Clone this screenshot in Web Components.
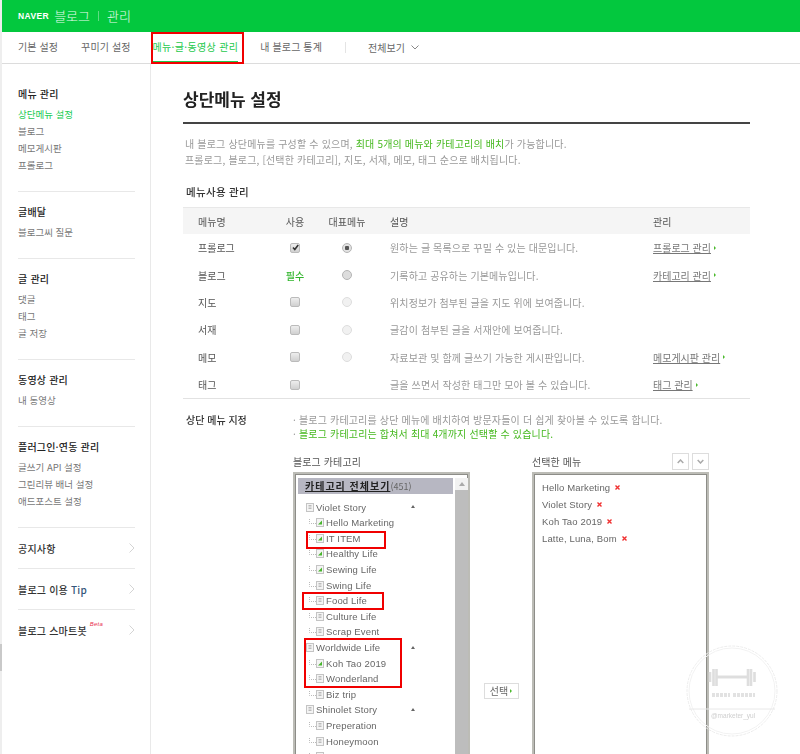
<!DOCTYPE html>
<html lang="ko">
<head>
<meta charset="utf-8">
<title>블로그 관리</title>
<style>
  html, body { margin: 0; padding: 0; background: #fff; }
  body {
    width: 800px; height: 754px; overflow: hidden; position: relative;
    font-family: "Noto Sans CJK KR", "Liberation Sans", sans-serif;
    font-size: 11px; color: #666;
  }
  admin-page { width: 800px; height: 754px; }
  side-fold b { font-weight: 500; color: #35557a; }
</style>
</head>
<body>
<admin-page>
  <blog-header></blog-header>
  <blog-nav></blog-nav>
  <side-menu slot="side">
    <side-group heading="메뉴 관리">
      <side-link active>상단메뉴 설정</side-link>
      <side-link>블로그</side-link>
      <side-link>메모게시판</side-link>
      <side-link>프롤로그</side-link>
    </side-group>
    <side-group heading="글배달"><side-link>블로그씨 질문</side-link></side-group>
    <side-group heading="글 관리">
      <side-link>댓글</side-link>
      <side-link>태그</side-link>
      <side-link>글 저장</side-link>
    </side-group>
    <side-group heading="동영상 관리"><side-link>내 동영상</side-link></side-group>
    <side-group heading="플러그인·연동 관리">
      <side-link>글쓰기 API 설정</side-link>
      <side-link>그린리뷰 배너 설정</side-link>
      <side-link>애드포스트 설정</side-link>
    </side-group>
    <side-fold>공지사항</side-fold>
    <side-fold>블로그 이용 <b>Tip</b></side-fold>
    <side-fold beta>블로그 스마트봇</side-fold>
  </side-menu>
  <main-panel slot="main">
    <menu-table>
      <menu-row name="프롤로그" use="on" rep="on" desc="원하는 글 목록으로 꾸밀 수 있는 대문입니다." link="프롤로그 관리"></menu-row>
      <menu-row name="블로그" use="must" rep="off" desc="기록하고 공유하는 기본메뉴입니다." link="카테고리 관리"></menu-row>
      <menu-row name="지도" use="off" rep="dim" desc="위치정보가 첨부된 글을 지도 위에 보여줍니다."></menu-row>
      <menu-row name="서재" use="off" rep="dim" desc="글감이 첨부된 글을 서재안에 보여줍니다."></menu-row>
      <menu-row name="메모" use="off" rep="dim" desc="자료보관 및 함께 글쓰기 가능한 게시판입니다." link="메모게시판 관리"></menu-row>
      <menu-row name="태그" use="off" desc="글을 쓰면서 작성한 태그만 모아 볼 수 있습니다." link="태그 관리"></menu-row>
    </menu-table>
    <menu-picker>
      <tree-box slot="left">
        <tree-row parent>Violet Story</tree-row>
        <tree-row green>Hello Marketing</tree-row>
        <tree-row green>IT ITEM</tree-row>
        <tree-row green>Healthy Life</tree-row>
        <tree-row green>Sewing Life</tree-row>
        <tree-row>Swing Life</tree-row>
        <tree-row>Food Life</tree-row>
        <tree-row>Culture Life</tree-row>
        <tree-row>Scrap Event</tree-row>
        <tree-row parent>Worldwide Life</tree-row>
        <tree-row green>Koh Tao 2019</tree-row>
        <tree-row>Wonderland</tree-row>
        <tree-row>Biz trip</tree-row>
        <tree-row parent>Shinolet Story</tree-row>
        <tree-row>Preperation</tree-row>
        <tree-row>Honeymoon</tree-row>
        <tree-row></tree-row>
      </tree-box>
      <picked-box slot="right">
        <picked-item>Hello Marketing</picked-item>
        <picked-item>Violet Story</picked-item>
        <picked-item>Koh Tao 2019</picked-item>
        <picked-item>Latte, Luna, Bom</picked-item>
      </picked-box>
    </menu-picker>
  </main-panel>
</admin-page>
<red-box style="left:151px;top:32px;width:93px;height:32px"></red-box>
<red-box style="left:306px;top:531px;width:80px;height:18px"></red-box>
<red-box style="left:302px;top:592px;width:82px;height:18px"></red-box>
<red-box style="left:304px;top:638px;width:98px;height:50px"></red-box>
<gym-stamp></gym-stamp>

<script>
const FONT = '"Noto Sans CJK KR", "Liberation Sans", sans-serif';

// Base: every element only sets its html in render()
class ShadowBase extends HTMLElement {
  constructor() {
    super();
    this.attachShadow({ mode: 'open' });
  }
  connectedCallback() {
    this.shadowRoot.innerHTML = this.render();
  }
}

class AdminPage extends ShadowBase {
  render() {
    return `<style>
      :host { display: block; position: relative; background: #fff; font-family: ${FONT}; filter: blur(.3px); }
      .wrap { margin-left: 2px; }
      .strip { position: absolute; left: 0; top: 0; bottom: 0; width: 2px; background: #eee; }
      .thumb { position: absolute; left: 0; top: 644px; width: 2px; height: 27px; background: #c9c9c9; }
      .body { display: flex; height: 690px; }
    </style>
    <div class="strip"></div><div class="thumb"></div>
    <div class="wrap">
      <slot></slot>
      <div class="body"><slot name="side"></slot><slot name="main"></slot></div>
    </div>`;
  }
}

class BlogHeader extends ShadowBase {
  render() {
    return `<style>
      :host { display: flex; align-items: center; height: 32px; background: #03c83e; color: #fff; padding-left: 16px; }
      .logo { font: 700 8.5px "Liberation Sans", sans-serif; letter-spacing: .4px; margin-right: 5px; }
      .t { font-size: 13px; font-weight: 300; line-height: 32px; color: #e8fbee; }
      .sep { width: 1px; height: 10px; background: #5fdc83; margin: 0 8px; }
    </style>
    <span class="logo">NAVER</span><span class="t">블로그</span><span class="sep"></span><span class="t">관리</span>`;
  }
}

class BlogNav extends ShadowBase {
  render() {
    return `<style>
      :host { display: flex; align-items: stretch; height: 31px; border-bottom: 1px solid #dcdcdc; padding-left: 16px; font-size: 10px; letter-spacing: .1px; color: #666; }
      span { line-height: 30px; margin-right: 23px; white-space: nowrap; }
      span.tight { margin-right: 22px; }
      .on { color: #1ec94c; box-shadow: inset 0 -2px 0 #1ec94c; margin-right: 22px; letter-spacing: .35px; }
      .sep { width: 1px; height: 11px; background: #e4e4e4; margin: 10px 22px 0 0; }
      .all { display: flex; align-items: center; gap: 6px; margin: 0; }
    </style>
    <span>기본 설정</span><span class="tight">꾸미기 설정</span><span class="on">메뉴·글·동영상 관리</span><span>내 블로그 통계</span>
    <span class="sep"></span>
    <span class="all">전체보기
      <svg width="8" height="5" viewBox="0 0 8 5"><path d="M.5.5 4 4 7.5.5" fill="none" stroke="#888"/></svg>
    </span>`;
  }
}

class SideMenu extends ShadowBase {
  render() {
    return `<style>
      :host { display: block; flex: none; width: 149px; box-sizing: border-box; padding: 10px 15px 0 16px; border-right: 1px solid #e9e9e9; }
    </style><slot></slot>`;
  }
}

class SideGroup extends ShadowBase {
  render() {
    return `<style>
      :host { display: block; padding: 11px 0 17px; border-bottom: 1px solid #e8e8e8; }
      h3 { margin: 0 0 4px; font-size: 10px; letter-spacing: .2px; line-height: 17px; font-weight: 500; color: #222; white-space: nowrap; }
    </style><h3>${this.getAttribute('heading')}</h3><slot></slot>`;
  }
}

class SideLink extends ShadowBase {
  render() {
    const on = this.hasAttribute('active');
    return `<style>
      :host { display: block; line-height: 17px; font-size: 9.5px; color: ${on ? '#22cc55' : '#777'}; white-space: nowrap; }
    </style><slot></slot>`;
  }
}

class SideFold extends ShadowBase {
  render() {
    const beta = this.hasAttribute('beta') ? '<i>Beta</i>' : '';
    return `<style>
      :host { display: flex; align-items: center; height: 40px; border-bottom: 1px solid #e8e8e8; font-size: 10px; letter-spacing: .2px; font-weight: 500; color: #333; white-space: pre; }
      :host(:last-child) { border-bottom: 0; }
      i { font: italic 6px "Liberation Sans", sans-serif; color: #e8324f; align-self: flex-start; margin: 11px 0 0 3px; }
      svg { margin-left: auto; }
    </style><span><slot></slot></span>${beta}
    <svg width="6" height="10" viewBox="0 0 6 10"><path d="M.5.5 5 5 .5 9.5" fill="none" stroke="#d4d4d4"/></svg>`;
  }
}

class MainPanel extends ShadowBase {
  render() {
    return `<style>
      :host { display: block; flex: 1; padding: 24px 0 0 32px; width: 567px; }
      .in { width: 567px; }
      h1 { margin: 0; font-size: 17px; line-height: 22px; font-weight: 700; color: #222; padding-bottom: 12px; border-bottom: 2px solid #444; }
      p { margin: 12px 0 0 2px; line-height: 16px; font-size: 10px; letter-spacing: .17px; color: #999; white-space: nowrap; }
      b { font-weight: 400; color: #45b81e; }
      h2 { margin: 16px 0 7px 3px; font-size: 10.5px; letter-spacing: .3px; line-height: 16px; font-weight: 500; color: #333; }
    </style>
    <div class="in">
      <h1>상단메뉴 설정</h1>
      <p>내 블로그 상단메뉴를 구성할 수 있으며, <b>최대 5개의 메뉴와 카테고리의 배치</b>가 가능합니다.<br>프롤로그, 블로그, [선택한 카테고리], 지도, 서재, 메모, 태그 순으로 배치됩니다.</p>
      <h2>메뉴사용 관리</h2>
      <slot></slot>
    </div>`;
  }
}

const ROW_GRID = 'display: grid; grid-template-columns: 15px 80px 34px 70px 8px 263px 97px; align-items: center; height: 27.4px;';

class MenuTable extends ShadowBase {
  render() {
    return `<style>
      :host { display: block; border-top: 1px solid #e8e8e8; border-bottom: 1px solid #e2e2e2; font-size: 10px; }
      .head { ${ROW_GRID} height: 26px; background: #f5f5f5; color: #555; }
      .c { text-align: center; }
    </style>
    <div class="head">
      <span></span><span>메뉴명</span><span class="c">사용</span><span class="c">대표메뉴</span><span></span><span>설명</span><span>관리</span>
    </div>
    <slot></slot>`;
  }
}

class MenuRow extends ShadowBase {
  render() {
    const use = this.getAttribute('use');
    const rep = this.getAttribute('rep');
    const link = this.getAttribute('link');
    let useCell = '<i class="box"></i>';
    if (use === 'on') {
      useCell = `<i class="box"><svg width="9" height="9" viewBox="0 0 9 9"><path d="M2 4.5 3.8 6.5 7.2 2" fill="none" stroke="#333" stroke-width="1.6"/></svg></i>`;
    } else if (use === 'must') {
      useCell = '<em>필수</em>';
    }
    const repCell = rep ? `<i class="rad ${rep}"></i>` : '';
    const linkCell = link ? `<u>${link}</u><s></s>` : '';
    return `<style>
      :host { ${ROW_GRID} display: grid; font-size: 10px; color: #888; }
      .n { color: #555; }
      .c { display: flex; justify-content: center; align-items: center; }
      .d { white-space: nowrap; color: #999; letter-spacing: .12px; }
      .l { display: flex; align-items: center; gap: 3px; white-space: nowrap; color: #777; }
      em { font-style: normal; font-weight: 500; color: #2fb52a; }
      .box { display: block; width: 8px; height: 8px; border: 1px solid #bbb; border-radius: 2px; background: linear-gradient(#eee, #d0d0d0); }
      .box svg { display: block; margin: -.5px; }
      .rad { display: block; width: 8px; height: 8px; border: 1px solid #b4b4b4; border-radius: 50%; background: #ddd; }
      .rad.on { background: radial-gradient(circle, #555 0 2px, #e2e2e2 2.5px); }
      .rad.dim { border-color: #ddd; background: #f1f1f1; }
      s { width: 0; height: 0; border-left: 2px solid #4cb92e; border-top: 2px solid transparent; border-bottom: 2px solid transparent; }
    </style>
    <span></span><span class="n">${this.getAttribute('name')}</span>
    <span class="c">${useCell}</span><span class="c">${repCell}</span><span></span>
    <span class="d">${this.getAttribute('desc')}</span><span class="l">${linkCell}</span>`;
  }
}

class MenuPicker extends ShadowBase {
  render() {
    return `<style>
      :host { display: grid; grid-template-columns: 107px 1fr; margin: 14px 0 0 3px; }
      h2 { margin: 0; font-size: 10px; line-height: 14px; font-weight: 500; color: #333; }
      .note { margin: 0; font-size: 10px; letter-spacing: .17px; line-height: 14px; color: #999; white-space: nowrap; }
      .note b { font-weight: 400; color: #45b81e; }
      .cols { grid-column: 2; display: flex; margin: 12px 0 0 0; }
      .col { width: 177px; flex: none; }
      .lab { display: flex; align-items: flex-end; justify-content: space-between; height: 17px; margin-bottom: 2px; font-size: 10px; letter-spacing: .1px; line-height: 14px; color: #555; }
      .lab .tx { padding-bottom: 1px; }
      .mid { width: 62px; flex: none; display: flex; justify-content: center; padding-top: 230px; box-sizing: border-box; }
      .sel { height: 16px; box-sizing: border-box; width: 35px; border: 1px solid #ddd; font-size: 10px; line-height: 14px; color: #666; display: flex; align-items: center; justify-content: center; gap: 2px; }
      .sel s { width: 0; height: 0; border-left: 2px solid #4cb92e; border-top: 2px solid transparent; border-bottom: 2px solid transparent; }
      .btns { display: flex; gap: 3px; }
      .btns span { width: 15px; height: 15px; border: 1px solid #ddd; display: flex; align-items: center; justify-content: center; }
    </style>
    <h2>상단 메뉴 지정</h2>
    <div>
      <p class="note">· 블로그 카테고리를 상단 메뉴에 배치하여 방문자들이 더 쉽게 찾아볼 수 있도록 합니다.</p>
      <p class="note">· <b>블로그 카테고리는 합쳐서 최대 4개까지 선택할 수 있습니다.</b></p>
    </div>
    <div class="cols">
      <div class="col"><div class="lab"><span class="tx">블로그 카테고리</span></div><slot name="left"></slot></div>
      <div class="mid"><span class="sel">선택<s></s></span></div>
      <div class="col">
        <div class="lab"><span class="tx">선택한 메뉴</span>
          <div class="btns">
            <span><svg width="7" height="5" viewBox="0 0 7 5"><path d="M.7 4 3.5 1 6.3 4" fill="none" stroke="#aaa" stroke-width="1.5"/></svg></span>
            <span><svg width="7" height="5" viewBox="0 0 7 5"><path d="M.7 1 3.5 4 6.3 1" fill="none" stroke="#aaa" stroke-width="1.5"/></svg></span>
          </div>
        </div>
        <slot name="right"></slot>
      </div>
    </div>`;
  }
}

class TreeBox extends ShadowBase {
  render() {
    return `<style>
      :host { display: flex; box-sizing: border-box; height: 300px; border: 2px solid #bcbcb6; box-shadow: inset 0 0 0 1px #8d8d88; padding: 4px 3px 0 3px; }
      .list { flex: none; width: 155px; }
      .all { height: 16px; background: #b7b7c2; padding-left: 7px; line-height: 16px; font-size: 9px; color: #666; white-space: nowrap; }
      .all u { color: #222; font-size: 10px; font-weight: 700; letter-spacing: 1px; }
      .rows { padding-top: 5px; }
      .bar { flex: none; width: 13px; margin-left: 2px; display: flex; flex-direction: column; background: #bdbdbd; }
      .up { height: 12px; background: #f2f2f2; display: flex; align-items: center; justify-content: center; }
      .up i { border: 3.5px solid transparent; border-top: 0; border-bottom: 4px solid #aaa; }
    </style>
    <div class="list">
      <div class="all"><u>카테고리 전체보기</u>(451)</div>
      <div class="rows"><slot></slot></div>
    </div>
    <div class="bar"><div class="up"><i></i></div></div>`;
  }
}

class TreeRow extends ShadowBase {
  render() {
    const parent = this.hasAttribute('parent');
    const green = this.hasAttribute('green');
    const fill = green
      ? '<path d="M2 6.5 6 2.5V6.5Z" fill="#47b52c"/>'
      : '<path d="M2.5 2.5H5.5M2.5 4H5.5M2.5 5.5H5.5" stroke="#bbb"/>';
    return `<style>
      :host { display: flex; position: relative; align-items: center; height: 15.6px; padding-left: ${parent ? 8 : 11}px; font: 9.5px "Liberation Sans", sans-serif; color: #666; white-space: nowrap; letter-spacing: .15px; }
      svg { flex: none; }
      .ic { margin-right: 2px; }
      .caret { position: absolute; left: 113px; top: 6px; border: 2.5px solid transparent; border-top: 0; border-bottom: 3px solid #666; }
      span { flex: none; }
    </style>
    ${parent ? '' : '<svg width="7" height="9" viewBox="0 0 7 9"><path d="M.5 1V5.5H7" fill="none" stroke="#bbb" stroke-dasharray="1 1"/></svg>'}
    <svg class="ic" width="8" height="9" viewBox="0 0 8 9"><rect x=".5" y=".5" width="7" height="8" fill="#f4f4f4" stroke="#c4c4c4"/>${fill}</svg>
    <span><slot></slot></span>
    ${parent ? '<i class="caret"></i>' : ''}`;
  }
}

class PickedBox extends ShadowBase {
  render() {
    return `<style>
      :host { display: block; box-sizing: border-box; height: 300px; border: 2px solid #bcbcb6; box-shadow: inset 0 0 0 1px #8d8d88; padding: 5px 0 0 8px; }
    </style><slot></slot>`;
  }
}

class PickedItem extends ShadowBase {
  render() {
    return `<style>
      :host { display: flex; align-items: center; gap: 5px; height: 17px; font: 9.5px "Liberation Sans", sans-serif; color: #666; letter-spacing: .15px; white-space: nowrap; }
    </style><span><slot></slot></span>
    <svg width="5" height="5" viewBox="0 0 5 5"><path d="M.5.5 4.5 4.5M4.5.5 .5 4.5" stroke="#f03030" stroke-width="1.4"/></svg>`;
  }
}

// Annotations drawn over the screenshot
class RedBox extends ShadowBase {
  render() {
    return `<style>
      :host { display: block; position: absolute; box-sizing: border-box; border: 2px solid #f00000; }
    </style>`;
  }
}

class GymStamp extends ShadowBase {
  render() {
    return `<style>
      :host { display: block; position: absolute; left: 686px; top: 645px; width: 92px; height: 92px; filter: blur(.4px); }
      svg { display: block; }
      text { font: 6.5px "Liberation Sans", sans-serif; fill: #cfcfcf; }
    </style>
    <svg width="92" height="92" viewBox="0 0 92 92" fill="none">
      <circle cx="46" cy="46" r="45" stroke="#ececec" stroke-dasharray="3 1"/>
      <circle cx="46" cy="46" r="43" stroke="#f2f2f2"/>
      <path d="M3 64H89" stroke="#e8e8e8"/>
      <path d="M30 32H62" stroke="#dedede" stroke-width="3"/>
      <path d="M24 27V37M27.500 24V41M30.500 24V41M62 24V41M65 24V41M68.500 27V37" stroke="#dedede" stroke-width="2.6"/>
      <path d="M26 50H44M47 50H69" stroke="#e2e2e2" stroke-width="4" stroke-dasharray="3 1"/>
      <text x="25" y="73">@marketer_yul</text>
    </svg>`;
  }
}

customElements.define('admin-page', AdminPage);
customElements.define('blog-header', BlogHeader);
customElements.define('blog-nav', BlogNav);
customElements.define('side-menu', SideMenu);
customElements.define('side-group', SideGroup);
customElements.define('side-link', SideLink);
customElements.define('side-fold', SideFold);
customElements.define('main-panel', MainPanel);
customElements.define('menu-table', MenuTable);
customElements.define('menu-row', MenuRow);
customElements.define('menu-picker', MenuPicker);
customElements.define('tree-box', TreeBox);
customElements.define('tree-row', TreeRow);
customElements.define('picked-box', PickedBox);
customElements.define('picked-item', PickedItem);
customElements.define('red-box', RedBox);
customElements.define('gym-stamp', GymStamp);
</script>
</body>
</html>
